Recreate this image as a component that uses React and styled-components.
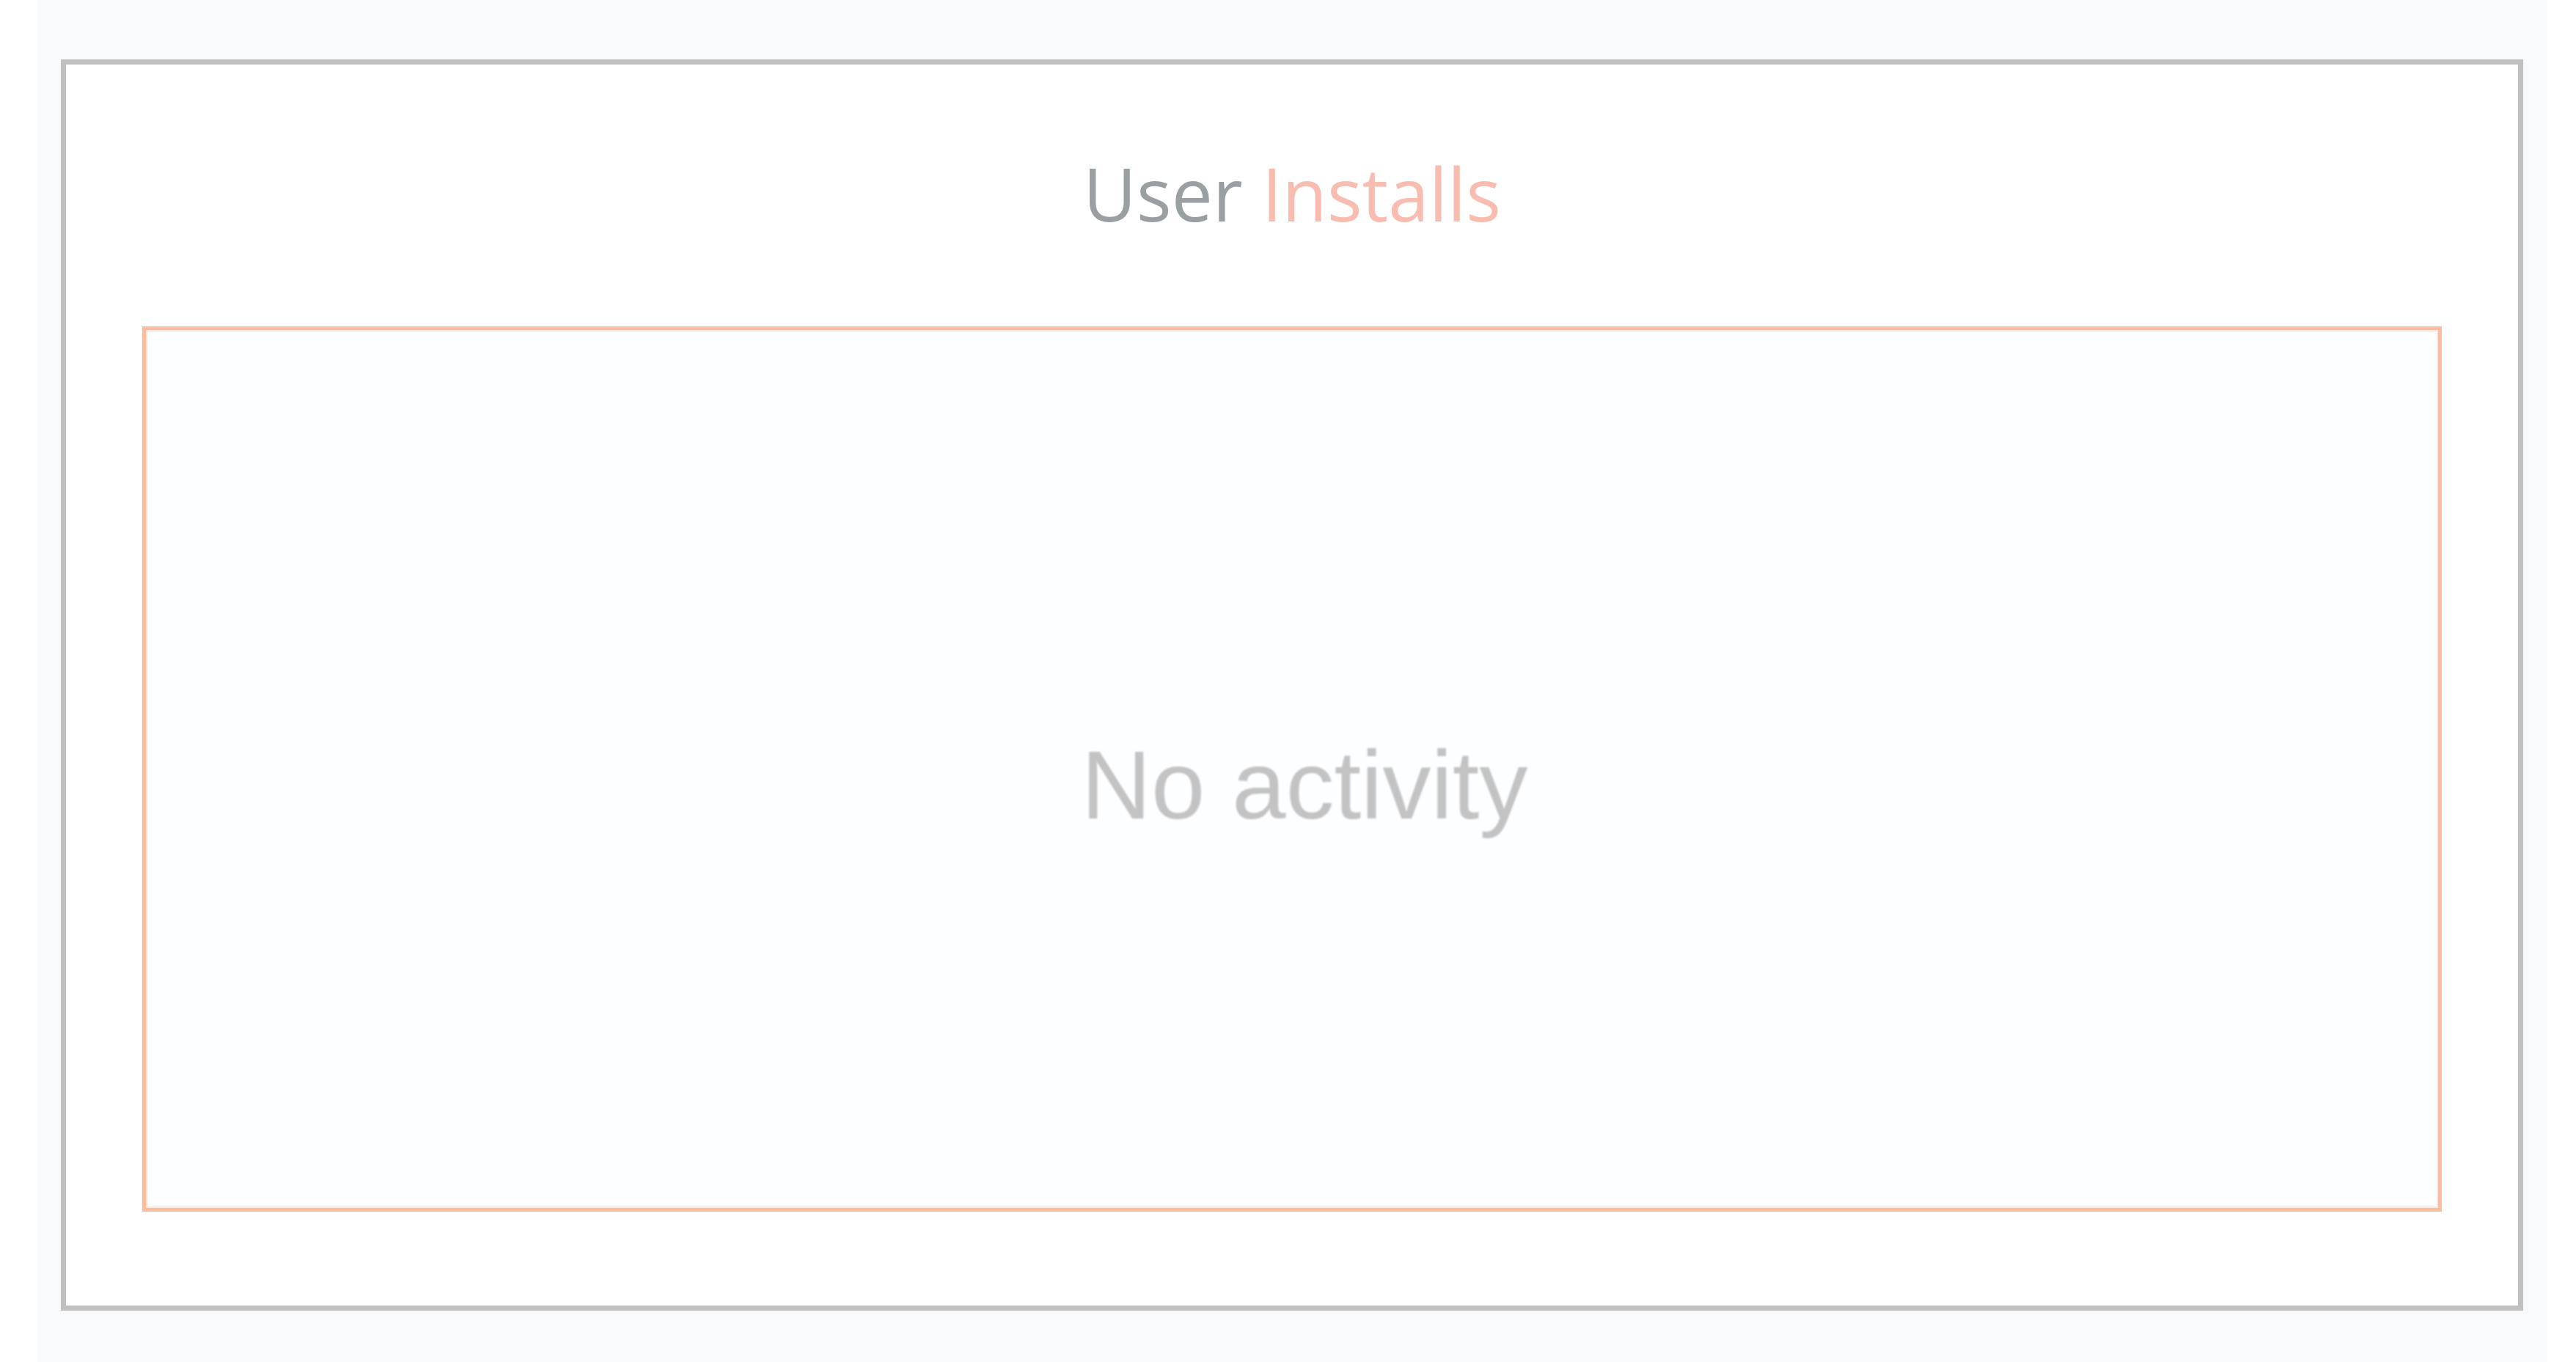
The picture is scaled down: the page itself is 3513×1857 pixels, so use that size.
import React from 'react'
import styled, {createGlobalStyle} from 'styled-components'

const GlobalStyle = createGlobalStyle`
  html, body {
    margin: 0;
    padding: 0;
    background-color: #ffffff;
  }
`

export const Page = styled.div`
  box-sizing: border-box;
  margin-left: 51px;
  width: 3422px;
  height: 1857px;
  padding: 81px 32px 0 32px;
  background-color: #f8f9fa;
`

export const Card = styled.section`
  box-sizing: border-box;
  width: 3358px;
  height: 1706px;
  border: 7px solid #c0c0c0;
  background-color: #ffffff;
  display: flex;
  flex-direction: column;
`

export const Heading = styled.h2`
  margin: 125px 0 132px 0;
  font-family: 'Open Sans', 'Noto Sans', sans-serif;
  font-weight: 400;
  font-size: 100px;
  line-height: 1;
  text-align: center;
  color: #9a9fa1;
`

export const Accent = styled.span`
  color: #f9bcb0;
`

export const ChartArea = styled.div`
  box-sizing: border-box;
  margin: 0 104px;
  height: 1207px;
  border: 5px solid #fbbd9e;
  box-shadow: inset 0 0 0 2px #fde6da;
  background-color: #fdfeff;
  display: flex;
  align-items: center;
  justify-content: center;
  padding: 43px 0 0 34px;
`

export const EmptyText = styled.p`
  margin: 0;
  font-family: 'Liberation Sans', Arial, sans-serif;
  font-size: 132px;
  color: #c3c3c3;
  filter: blur(0.8px);
`

export default function App() {
  return (
    <>
      <GlobalStyle />
      <Page>
        <Card>
          <Heading>
            User <Accent>Installs</Accent>
          </Heading>
          <ChartArea>
            <EmptyText>No activity</EmptyText>
          </ChartArea>
        </Card>
      </Page>
    </>
  )
}
